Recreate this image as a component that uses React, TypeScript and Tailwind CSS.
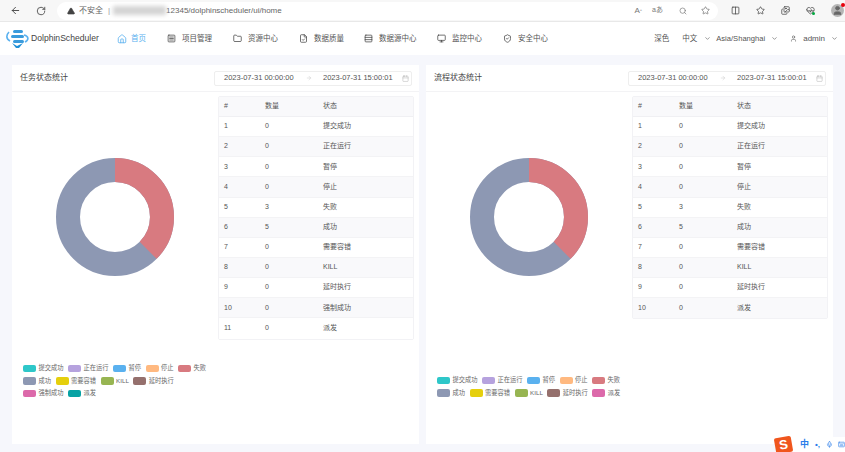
import { ArrowLeft, RotateCw, TriangleAlert, Home, SquareMenu, Folder, FileCheck, Rows3, Monitor, ShieldCheck, ChevronDown, User, Star, Search, Columns2, Calendar, ArrowRight, HeartPulse, Images, Mic, Keyboard } from "lucide-react"

const font = "font-['Liberation_Sans','Noto_Sans_CJK_SC',sans-serif]"

const navItems = [
    { label: "项目管理", icon: SquareMenu, w: "w-[66px]" },
    { label: "资源中心", icon: Folder, w: "w-[66px]" },
    { label: "数据质量", icon: FileCheck, w: "w-[65px]" },
    { label: "数据源中心", icon: Rows3, w: "w-[73px]" },
    { label: "监控中心", icon: Monitor, w: "w-[66px]" },
    { label: "安全中心", icon: ShieldCheck, w: "w-[60px]" },
]

const rows = [
    ["提交成功", 0, "bg-[#2ec7c9]"],
    ["正在运行", 0, "bg-[#b6a2de]"],
    ["暂停", 0, "bg-[#5ab1ef]"],
    ["停止", 0, "bg-[#ffb980]"],
    ["失败", 3, "bg-[#d87a80]"],
    ["成功", 5, "bg-[#8d98b3]"],
    ["需要容错", 0, "bg-[#e5cf0d]"],
    ["KILL", 0, "bg-[#97b552]"],
    ["延时执行", 0, "bg-[#95706d]"],
    ["强制成功", 0, "bg-[#dc69aa]"],
    ["派发", 0, "bg-[#07a2a4]"],
] as const

const Donut = () => (
    <svg width="120" height="120" viewBox="-60 -60 120 120">
        <circle r="47" fill="none" stroke="#8d98b3" strokeWidth="24" />
        <circle r="47" fill="none" stroke="#d87a80" strokeWidth="24" strokeDasharray="110.7 295.3" transform="rotate(-90)" />
    </svg>
)

const Card = ({ title, data, legendTop }: { title: string; data: readonly (readonly [string, number, string])[]; legendTop: string }) => (
    <div className="w-[407px] h-[379px] bg-white flex flex-col">
        <div className="h-[27px] shrink-0 flex items-center justify-between pl-[8px] pr-[8px] border-b border-[#f3f3f5]">
            <span className="text-[8px] text-[#444]">{title}</span>
            <div className="w-[198px] h-[15px] border border-[#eeeeee] rounded-[2px] flex items-center pl-[9px] text-[7.5px] text-[#555] mr-[-1px]">
                <span className="w-[72px]">2023-07-31 00:00:00</span>
                <ArrowRight className="w-[6px] h-[6px] text-[#c8c8c8] ml-[10px]" />
                <span className="w-[72px] ml-[11px]">2023-07-31 15:00:01</span>
                <Calendar className="w-[7px] h-[7px] text-[#bbb] ml-[7px]" />
            </div>
        </div>
        <div className="flex flex-1 relative">
            <div className="w-[206px] shrink-0 flex flex-col">
                <div className="pl-[43px] pt-[65px]">
                    <Donut />
                </div>
                <div className={`${legendTop} pl-[11px] pr-[4px] flex flex-wrap gap-x-[4.5px] gap-y-[4px] w-[206px]`}>
                    {data.map(([name, , color]) => (
                        <div key={name} className="flex items-center gap-[2.5px] h-[8.5px]">
                            <span className={`w-[13px] h-[7.5px] rounded-[2px] ${color}`} />
                            <span className="text-[6.25px] text-[#666] leading-none">{name}</span>
                        </div>
                    ))}
                </div>
            </div>
            <div className="w-[196px] mt-[4px] self-start border border-[#f2f2f5] rounded-[2px] text-[7px] text-[#555]">
                <div className="flex items-center h-[20px] bg-[#f9f9fb] border-b border-[#f0f0f3]">
                    <span className="w-[46px] pl-[5px]">#</span>
                    <span className="w-[58px]">数量</span>
                    <span>状态</span>
                </div>
                {data.map(([name, count], i) => (
                    <div key={name} className={`flex items-center h-[20.15px] border-b last:border-b-0 border-[#f3f3f5] ${i % 2 === 1 ? "bg-[#f9f9fb]" : "bg-white"}`}>
                        <span className="w-[46px] pl-[5px]">{i + 1}</span>
                        <span className="w-[58px]">{count}</span>
                        <span>{name}</span>
                    </div>
                ))}
            </div>
        </div>
    </div>
)

export default function App() {
    const flow = [...rows.slice(0, 9), rows[10]].map((r, i) =>
        i === 9 ? (["派发", 0, "bg-[#dc69aa]"] as const) : r
    )

    return (
        <div className={`w-[845px] h-[452px] overflow-hidden bg-[#f6f7fc] relative ${font}`}>
            {/* browser bar */}
            <div className="h-[22px] bg-[#f7f7f7] flex items-center border-b border-[#e8e8e8]">
                <ArrowLeft className="w-[11px] h-[11px] ml-[10px] text-[#444]" />
                <RotateCw className="w-[10px] h-[10px] ml-[15px] text-[#444]" />
                <div className="ml-[11px] w-[661px] h-[18px] bg-white rounded-full flex items-center pl-[10px] text-[8px] text-[#666]">
                    <TriangleAlert className="w-[8px] h-[8px] text-[#444]" fill="#444" stroke="#444" />
                    <span className="ml-[4px]">不安全</span>
                    <span className="ml-[5px] text-[#999]">|</span>
                    <span className="ml-[3px] w-[53px] h-[9px] bg-[#d4d4d4] blur-[2px]" />
                    <span>12345/dolphinscheduler/ui/home</span>
                    <div className="ml-auto flex items-center pr-[8px] text-[#777]">
                        <span className="text-[8px]">A<sup className="text-[4px]">+</sup></span>
                        <span className="text-[7px] ml-[10px]">aあ</span>
                        <Search className="w-[8px] h-[8px] ml-[16px]" />
                        <Star className="w-[9px] h-[9px] ml-[14px]" />
                    </div>
                </div>
                <div className="flex items-center gap-[16px] ml-[13px] text-[#444]">
                    <Columns2 className="w-[9px] h-[9px]" />
                    <Star className="w-[9px] h-[9px]" />
                    <Images className="w-[9px] h-[9px]" />
                    <div className="relative">
                        <HeartPulse className="w-[9px] h-[9px]" />
                        <span className="absolute right-0 bottom-0 w-[3px] h-[3px] rounded-full bg-green-600" />
                    </div>
                    <div className="relative w-[13px] h-[13px] rounded-full bg-[#b5b5b5]">
                        <User className="w-[11px] h-[11px] m-px text-[#666]" fill="#666" />
                        <span className="absolute -right-px -top-px w-[4px] h-[4px] rounded-full bg-red-600" />
                    </div>
                </div>
            </div>

            {/* nav */}
            <div className="h-[33px] bg-white flex items-center text-[7.5px] text-[#555]">
                <svg width="24" height="22" viewBox="0 0 24 22" className="ml-[6px]">
                    <rect x="7" y="2" width="10" height="3" rx="1.5" fill="#3a9bdc" />
                    <rect x="5" y="7" width="13" height="3" rx="1.5" fill="#3a9bdc" />
                    <rect x="7" y="12" width="11" height="3" rx="1.5" fill="#3a9bdc" />
                    <path d="M3 4 C0 7 0 11 4 13 M18 7 C23 8 23 12 19 14" stroke="#5ab1ef" strokeWidth="1.6" fill="none" />
                    <path d="M6 15 l5 3 l6 -3 l-4 5 l-3 0 z" fill="#1f8fd6" />
                </svg>
                <span className="text-[8.6px] ml-[1px] w-[80px] text-[#444]">DolphinScheduler</span>
                <div className="flex items-center w-[50px] ml-[6px] text-[#5ab1ef]">
                    <Home className="w-[10px] h-[10px] mr-[4px]" />
                    首页
                </div>
                {navItems.map(({ label, icon: Icon, w }) => (
                    <div key={label} className={`flex items-center shrink-0 ${w}`}>
                        <Icon className="w-[9px] h-[9px] mr-[6px] text-[#444]" />
                        {label}
                    </div>
                ))}
                <div className="ml-auto flex items-center pr-[7px]">
                    <span>深色</span>
                    <span className="ml-[13px]">中文</span>
                    <ChevronDown className="w-[7px] h-[7px] ml-[7px]" />
                    <span className="ml-[5px] text-[7.6px]">Asia/Shanghai</span>
                    <ChevronDown className="w-[7px] h-[7px] ml-[6px]" />
                    <User className="w-[7px] h-[7px] ml-[12px]" />
                    <span className="ml-[6px] text-[8px]">admin</span>
                    <ChevronDown className="w-[7px] h-[7px] ml-[6px]" />
                </div>
            </div>

            {/* cards */}
            <div className="flex gap-[7px] pl-[12px] pt-[10px]">
                <Card title="任务状态统计" data={rows} legendTop="mt-[87px]" />
                <Card title="流程状态统计" data={flow} legendTop="mt-[99px]" />
            </div>

            {/* ime toolbar */}
            <div className="absolute right-0 bottom-0 h-[15px] w-[70px] flex items-center text-[9px] text-[#2b7de9] font-bold">
                <div className="absolute left-[10px] right-0 inset-y-0 bg-white" />
                <span className="absolute left-0 bottom-[-1px] w-[17px] h-[16px] bg-[#f0561d] text-white text-[13px] leading-[16px] text-center rotate-[-10deg] rounded-[2px]">S</span>
                <span className="relative ml-[25px]">中</span>
                <span className="relative ml-[6px] text-[8px]">•,</span>
                <Mic className="relative w-[9px] h-[9px] ml-[6px]" />
                <Keyboard className="relative w-[9px] h-[9px] ml-[5px]" />
            </div>
        </div>
    )
}
